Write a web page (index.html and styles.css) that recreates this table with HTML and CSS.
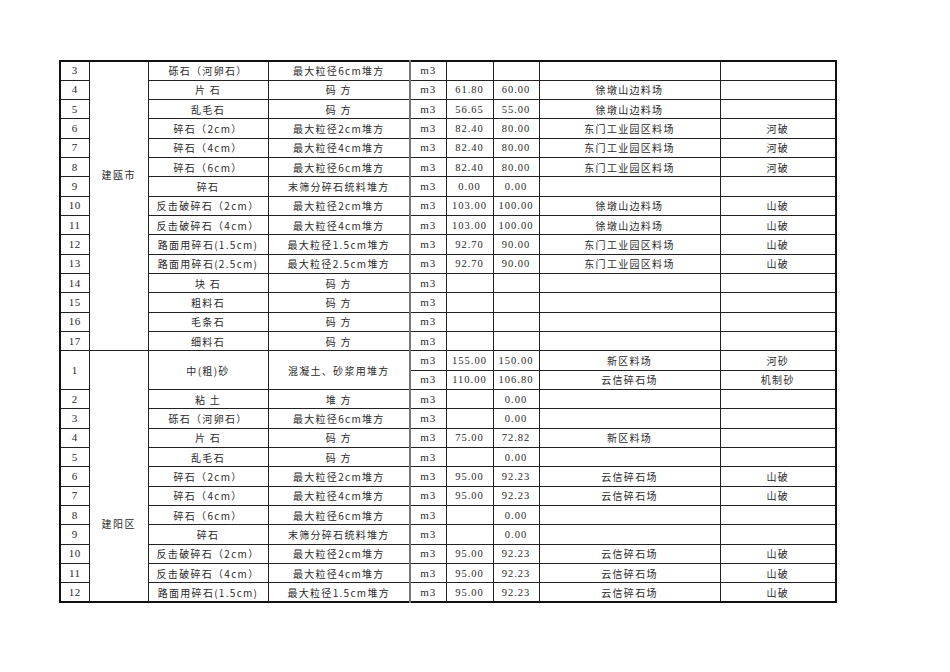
FILE: index.html
```html
<!DOCTYPE html>
<html lang="zh">
<head>
<meta charset="utf-8">
<link rel="stylesheet" href="styles.css">
</head>
<body>
<div class="page">
<table class="grid">
<colgroup>
<col class="c1"><col class="c2"><col class="c3"><col class="c4"><col class="c5"><col class="c6"><col class="c7"><col class="c8"><col class="c9">
</colgroup>
<tbody>
<tr><td class="no">3</td><td class="region" rowspan="15"><div class="rg rg1">建瓯市</div></td><td>砾石（河卵石）</td><td>最大粒径6cm堆方</td><td class="unit">m3</td><td class="num"></td><td class="num"></td><td></td><td></td></tr>
<tr><td class="no">4</td><td>片 石</td><td>码 方</td><td class="unit">m3</td><td class="num">61.80</td><td class="num">60.00</td><td>徐墩山边料场</td><td></td></tr>
<tr><td class="no">5</td><td>乱毛石</td><td>码 方</td><td class="unit">m3</td><td class="num">56.65</td><td class="num">55.00</td><td>徐墩山边料场</td><td></td></tr>
<tr><td class="no">6</td><td>碎石（2cm）</td><td>最大粒径2cm堆方</td><td class="unit">m3</td><td class="num">82.40</td><td class="num">80.00</td><td>东门工业园区料场</td><td>河破</td></tr>
<tr><td class="no">7</td><td>碎石（4cm）</td><td>最大粒径4cm堆方</td><td class="unit">m3</td><td class="num">82.40</td><td class="num">80.00</td><td>东门工业园区料场</td><td>河破</td></tr>
<tr><td class="no">8</td><td>碎石（6cm）</td><td>最大粒径6cm堆方</td><td class="unit">m3</td><td class="num">82.40</td><td class="num">80.00</td><td>东门工业园区料场</td><td>河破</td></tr>
<tr><td class="no">9</td><td>碎石</td><td>末筛分碎石统料堆方</td><td class="unit">m3</td><td class="num">0.00</td><td class="num">0.00</td><td></td><td></td></tr>
<tr><td class="no">10</td><td>反击破碎石（2cm）</td><td>最大粒径2cm堆方</td><td class="unit">m3</td><td class="num">103.00</td><td class="num">100.00</td><td>徐墩山边料场</td><td>山破</td></tr>
<tr><td class="no">11</td><td>反击破碎石（4cm）</td><td>最大粒径4cm堆方</td><td class="unit">m3</td><td class="num">103.00</td><td class="num">100.00</td><td>徐墩山边料场</td><td>山破</td></tr>
<tr><td class="no">12</td><td>路面用碎石(1.5cm)</td><td>最大粒径1.5cm堆方</td><td class="unit">m3</td><td class="num">92.70</td><td class="num">90.00</td><td>东门工业园区料场</td><td>山破</td></tr>
<tr><td class="no">13</td><td>路面用碎石(2.5cm)</td><td>最大粒径2.5cm堆方</td><td class="unit">m3</td><td class="num">92.70</td><td class="num">90.00</td><td>东门工业园区料场</td><td>山破</td></tr>
<tr><td class="no">14</td><td>块 石</td><td>码 方</td><td class="unit">m3</td><td class="num"></td><td class="num"></td><td></td><td></td></tr>
<tr><td class="no">15</td><td>粗料石</td><td>码 方</td><td class="unit">m3</td><td class="num"></td><td class="num"></td><td></td><td></td></tr>
<tr><td class="no">16</td><td>毛条石</td><td>码 方</td><td class="unit">m3</td><td class="num"></td><td class="num"></td><td></td><td></td></tr>
<tr><td class="no">17</td><td>细料石</td><td>码 方</td><td class="unit">m3</td><td class="num"></td><td class="num"></td><td></td><td></td></tr>
<tr><td class="no" rowspan="2">1</td><td class="region" rowspan="14"><div class="rg rg2">建阳区</div></td><td rowspan="2">中(粗)砂</td><td rowspan="2">混凝土、砂浆用堆方</td><td class="unit">m3</td><td class="num">155.00</td><td class="num">150.00</td><td>新区料场</td><td>河砂</td></tr>
<tr><td class="unit">m3</td><td class="num">110.00</td><td class="num">106.80</td><td>云信碎石场</td><td>机制砂</td></tr>
<tr><td class="no">2</td><td>粘 土</td><td>堆 方</td><td class="unit">m3</td><td class="num"></td><td class="num">0.00</td><td></td><td></td></tr>
<tr><td class="no">3</td><td>砾石（河卵石）</td><td>最大粒径6cm堆方</td><td class="unit">m3</td><td class="num"></td><td class="num">0.00</td><td></td><td></td></tr>
<tr><td class="no">4</td><td>片 石</td><td>码 方</td><td class="unit">m3</td><td class="num">75.00</td><td class="num">72.82</td><td>新区料场</td><td></td></tr>
<tr><td class="no">5</td><td>乱毛石</td><td>码 方</td><td class="unit">m3</td><td class="num"></td><td class="num">0.00</td><td></td><td></td></tr>
<tr><td class="no">6</td><td>碎石（2cm）</td><td>最大粒径2cm堆方</td><td class="unit">m3</td><td class="num">95.00</td><td class="num">92.23</td><td>云信碎石场</td><td>山破</td></tr>
<tr><td class="no">7</td><td>碎石（4cm）</td><td>最大粒径4cm堆方</td><td class="unit">m3</td><td class="num">95.00</td><td class="num">92.23</td><td>云信碎石场</td><td>山破</td></tr>
<tr><td class="no">8</td><td>碎石（6cm）</td><td>最大粒径6cm堆方</td><td class="unit">m3</td><td class="num"></td><td class="num">0.00</td><td></td><td></td></tr>
<tr><td class="no">9</td><td>碎石</td><td>末筛分碎石统料堆方</td><td class="unit">m3</td><td class="num"></td><td class="num">0.00</td><td></td><td></td></tr>
<tr><td class="no">10</td><td>反击破碎石（2cm）</td><td>最大粒径2cm堆方</td><td class="unit">m3</td><td class="num">95.00</td><td class="num">92.23</td><td>云信碎石场</td><td>山破</td></tr>
<tr><td class="no">11</td><td>反击破碎石（4cm）</td><td>最大粒径4cm堆方</td><td class="unit">m3</td><td class="num">95.00</td><td class="num">92.23</td><td>云信碎石场</td><td>山破</td></tr>
<tr><td class="no">12</td><td>路面用碎石(1.5cm)</td><td>最大粒径1.5cm堆方</td><td class="unit">m3</td><td class="num">95.00</td><td class="num">92.23</td><td>云信碎石场</td><td>山破</td></tr>
</tbody>
</table>
</div>
</body>
</html>
```

FILE: styles.css
```css
html, body {
  margin: 0;
  padding: 0;
  background: #fff;
}

.page {
  padding: 60px 0 0 59px;
}

.grid {
  border-collapse: collapse;
  table-layout: fixed;
  width: 776px;
  border: 2px solid #111;
  font-family: "Noto Sans CJK SC", "Liberation Serif", sans-serif;
  font-size: 10px;
  color: #2a2a2a;
}

.c1 { width: 29px; }
.c2 { width: 59px; }
.c3 { width: 120px; }
.c4 { width: 142px; }
.c5 { width: 36px; }
.c6 { width: 47px; }
.c7 { width: 46px; }
.c8 { width: 181px; }
.c9 { width: 116px; }

.grid tr {
  height: 19.33px;
}

.grid td {
  border: 1px solid #222;
  padding: 0;
  text-align: center;
  vertical-align: middle;
  line-height: 17px;
  letter-spacing: 1.3px;
  white-space: nowrap;
  overflow: hidden;
}

.grid td.no {
  font-family: "Liberation Serif", serif;
  font-size: 11px;
  letter-spacing: 0.5px;
}

.grid td.unit {
  font-family: "Liberation Serif", serif;
  font-size: 11px;
  letter-spacing: 1px;
  border-left: 2px solid #777;
}

.grid td.num {
  font-family: "Liberation Serif", serif;
  font-size: 10.5px;
  letter-spacing: 1px;
}

.grid td.region {
  vertical-align: top;
  text-align: left;
}

.rg {
  padding-left: 12px;
  letter-spacing: 1.5px;
}

.rg1 { padding-top: 104px; }
.rg2 { padding-top: 164px; }
```
